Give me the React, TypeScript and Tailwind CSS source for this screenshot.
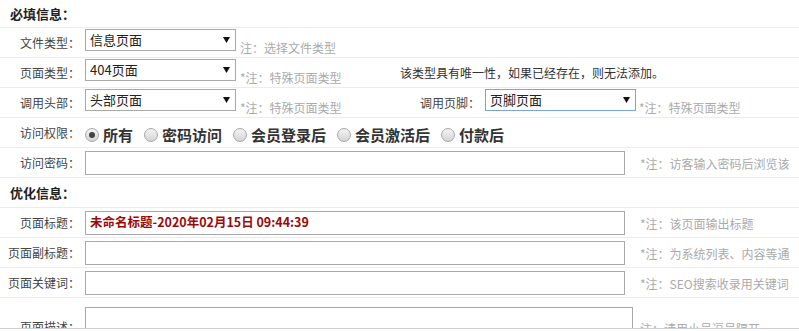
import React from 'react';

const FONT = { fontFamily: '"Noto Sans CJK SC", "Noto Sans", "Liberation Sans", sans-serif' };

function Label({ text }: { text: string }) {
  return <div className="w-[80px] shrink-0 text-right text-[12px] leading-4 text-[#444]">{text}</div>;
}

function Note({ text, className = '' }: { text: string; className?: string }) {
  return (
    <div className={`w-[152px] shrink-0 overflow-hidden whitespace-nowrap text-[12px] leading-4 text-[#aaa] ${className}`}>
      {text}
    </div>
  );
}

function Select({ value, focus = false }: { value: string; focus?: boolean }) {
  return (
    <div
      className={`relative ml-[5px] flex h-[22px] w-[151px] shrink-0 items-center self-start border bg-white pl-[4px] text-[13px] text-[#222] ${
        focus ? 'border-[#7ba4d6]' : 'border-[#a9a9a9]'
      }`}
    >
      {value}
      <svg className="absolute right-[5px] top-[7px]" width="7" height="6" viewBox="0 0 7 6">
        <path d="M0 0H7L3.5 6Z" fill="#111" />
      </svg>
    </div>
  );
}

function Radio({ checked }: { checked?: boolean }) {
  return (
    <span className="flex h-[14px] w-[14px] items-center justify-center rounded-full border border-[#a8a8a8] bg-gradient-to-b from-[#f4f4f4] to-[#d4d4d4]">
      {checked && <span className="h-[6px] w-[6px] rounded-full bg-[#444]" />}
    </span>
  );
}

function SelectRow({
  label,
  value,
  note,
  right,
}: {
  label: string;
  value: string;
  note: string;
  right?: React.ReactNode;
}) {
  return (
    <div className="flex h-[30px] border-b border-[#ececec]">
      <div className="flex w-[400px] shrink-0 items-center">
        <Label text={label} />
        <div className="flex h-full items-start pt-[1px]">
          <Select value={value} />
        </div>
        <Note text={note} className="ml-[4px] self-end mb-[1px]" />
      </div>
      {right}
    </div>
  );
}

function InputRow({ label, note, value }: { label: string; note: string; value?: string }) {
  return (
    <div className="flex h-[30px] items-center border-b border-[#ececec]">
      <Label text={label} />
      <div className="ml-[5px] flex h-[24px] w-[540px] shrink-0 items-center border border-[#a9a9a9] bg-white pl-[4px] text-[12.5px] font-bold text-[#9b0a0a]">
        {value}
      </div>
      <Note text={note} className="ml-[15px] mt-[3px]" />
    </div>
  );
}

function Header({ text, h }: { text: string; h: string }) {
  return (
    <div className={`flex ${h} items-center border-b border-[#ececec] pl-[10px] text-[13px] font-bold text-[#222]`}>
      {text}
    </div>
  );
}

const RADIOS = ['所有', '密码访问', '会员登录后', '会员激活后', '付款后'];

export default function App() {
  return (
    <div className="h-[331px] w-[799px] overflow-hidden bg-white" style={FONT}>
      <div className="h-[329px] overflow-hidden border-b border-[#cfcfcf]">
        <Header text="必填信息：" h="h-[28px]" />
        <SelectRow label="文件类型：" value="信息页面" note="注：选择文件类型" />
        <SelectRow
          label="页面类型："
          value="404页面"
          note="*注：特殊页面类型"
          right={<div className="flex items-center text-[12px] text-[#333]">该类型具有唯一性，如果已经存在，则无法添加。</div>}
        />
        <SelectRow
          label="调用头部："
          value="头部页面"
          note="*注：特殊页面类型"
          right={
            <div className="flex items-center">
              <Label text="调用页脚：" />
              <div className="flex h-full items-start pt-[1px]">
                <Select value="页脚页面" focus />
              </div>
              <Note text="*注：特殊页面类型" className="ml-[3px] self-end mb-[1px]" />
            </div>
          }
        />
        <div className="flex h-[30px] items-center border-b border-[#ececec]">
          <Label text="访问权限：" />
          <div className="ml-[5px] mt-[4px] flex items-center gap-[11px]">
            {RADIOS.map((r, i) => (
              <div key={r} className="flex items-center gap-[4px]">
                <Radio checked={i === 0} />
                <span className="text-[15px] font-bold leading-5 text-[#333]">{r}</span>
              </div>
            ))}
          </div>
        </div>
        <InputRow label="访问密码：" note="*注：访客输入密码后浏览该" />
        <Header text="优化信息：" h="h-[30px]" />
        <InputRow label="页面标题：" note="*注：该页面输出标题" value="未命名标题-2020年02月15日 09:44:39" />
        <InputRow label="页面副标题：" note="*注：为系统列表、内容等通" />
        <InputRow label="页面关键词：" note="*注：SEO搜索收录用关键词" />
        <div className="flex h-[58px] items-center border-b border-[#ececec]">
          <Label text="页面描述：" />
          <div className="ml-[5px] h-[40px] w-[548px] shrink-0 border border-[#a9a9a9] bg-white" />
          <Note text="注：请用小号逗号隔开" className="ml-[7px] mt-[4px]" />
        </div>
      </div>
    </div>
  );
}
